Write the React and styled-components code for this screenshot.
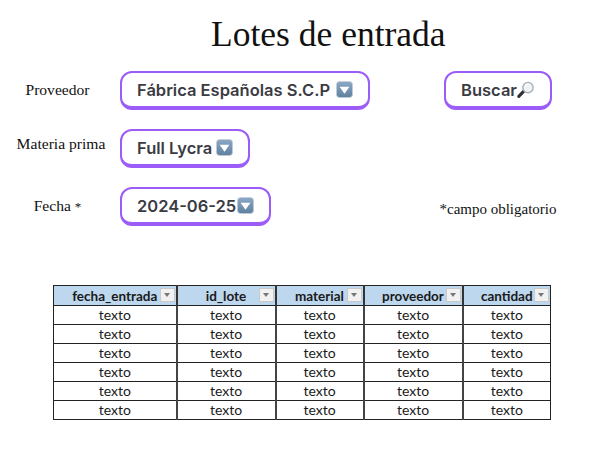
import styled, { createGlobalStyle } from 'styled-components'

const COLUMNS = [
    { name: 'fecha_entrada', width: 123 },
    { name: 'id_lote', width: 99 },
    { name: 'material', width: 88 },
    { name: 'proveedor', width: 99 },
    { name: 'cantidad', width: 88 },
]
const ROWS = [1, 2, 3, 4, 5, 6]

const ArrowEmoji = () => (
    <EmojiSvg $size={17} viewBox="0 0 18 18">
        <defs>
            <linearGradient id="arrowBg" x1="0" y1="0" x2="0" y2="1">
                <stop offset="0" stopColor="#8ba9c6" />
                <stop offset="1" stopColor="#5f7f9f" />
            </linearGradient>
        </defs>
        <rect x="0.5" y="0.5" width="17" height="17" rx="3.5" fill="url(#arrowBg)" stroke="#c4ced8" strokeWidth="0.8" />
        <path d="M3.8 6 H14.2 L9 13.6 Z" fill="#fff" />
    </EmojiSvg>
)

const LensEmoji = () => (
    <EmojiSvg $size={18} viewBox="0 0 18 18">
        <path d="M6.6 10.4 L1.8 15.4" stroke="#2d2f33" strokeWidth="3" strokeLinecap="round" />
        <circle cx="11" cy="6.6" r="5.2" fill="#eef3f7" stroke="#a9afb5" strokeWidth="1.4" />
        <path d="M8 5.6 A3.4 3.4 0 0 1 11 3.2" fill="none" stroke="#fff" strokeWidth="1.2" />
    </EmojiSvg>
)

export default function App() {
    return (
        <Page>
            <GlobalStyle />
            <Title>Lotes de entrada</Title>
            <Form>
                <Row>
                    <Label>Proveedor</Label>
                    <Pill $gap={6}>Fábrica Españolas S.C.P<ArrowEmoji /></Pill>
                    <Side>
                        <Pill>Buscar<LensEmoji /></Pill>
                    </Side>
                </Row>
                <Row>
                    <Label $shift={7} $top={6}>Materia prima</Label>
                    <Pill $gap={4}>Full Lycra<ArrowEmoji /></Pill>
                </Row>
                <Row>
                    <Label>Fecha <Star>*</Star></Label>
                    <Pill $gap={1}>2024-06-25<ArrowEmoji /></Pill>
                    <Side>
                        <Note>*campo obligatorio</Note>
                    </Side>
                </Row>
            </Form>
            <Table>
                <thead>
                    <tr>
                        {COLUMNS.map((col) => (
                            <HeadCell key={col.name} $width={col.width}>
                                {col.name}
                                <FilterButton />
                            </HeadCell>
                        ))}
                    </tr>
                </thead>
                <tbody>
                    {ROWS.map((row) => (
                        <tr key={row}>
                            {COLUMNS.map((col) => (
                                <Cell key={col.name}>texto</Cell>
                            ))}
                        </tr>
                    ))}
                </tbody>
            </Table>
        </Page>
    )
}

const GlobalStyle = createGlobalStyle`
    html, body {
        margin: 0;
        background: #fff;
    }
`
const Page = styled.div`
    width: 598px;
    height: 464px;
    overflow: hidden;
    box-sizing: border-box;
    padding-top: 13px;
    font-family: "Liberation Serif", serif;
    color: #111;
`
const Title = styled.h1`
    margin: 0 0 0 211px;
    font-size: 35.5px;
    line-height: 42px;
    font-weight: 400;
    white-space: nowrap;
`
const Form = styled.div`
    display: flex;
    flex-direction: column;
    gap: 19px;
    margin-top: 16px;
    padding-right: 40px;
`
const Row = styled.div`
    display: flex;
    align-items: flex-start;
    height: 39px;
`
const Label = styled.div`
    box-sizing: border-box;
    width: 120px;
    flex: none;
    padding: ${({ $top }) => $top || 10}px 5px 0 ${({ $shift }) => $shift || 0}px;
    font-size: 15.6px;
    line-height: 18px;
    text-align: center;
    white-space: nowrap;
`
const Star = styled.span`
    font-size: 13px;
`
const Pill = styled.div`
    box-sizing: border-box;
    display: inline-flex;
    align-items: center;
    gap: ${({ $gap }) => $gap || 0}px;
    height: 39px;
    padding: 0 15px;
    background: #fff;
    border: 2px solid #9c5cf7;
    border-bottom-width: 4px;
    border-radius: 12px;
    font-family: Inter, sans-serif;
    font-size: 16.5px;
    font-weight: 600;
    color: #3b3b43;
    white-space: nowrap;
`
const EmojiSvg = styled.svg`
    width: ${({ $size }) => $size}px;
    height: ${({ $size }) => $size}px;
    flex: none;
`
const Side = styled.div`
    width: 120px;
    margin-left: auto;
    display: flex;
    justify-content: center;
`
const Note = styled.div`
    padding-top: 13px;
    font-size: 15px;
    line-height: 18px;
    white-space: nowrap;
`
const Table = styled.table`
    border-collapse: collapse;
    table-layout: fixed;
    width: 497px;
    margin: 59px 0 0 53px;
    font-family: Lato, sans-serif;
    font-size: 14px;
    color: #1a1a1a;
`
const HeadCell = styled.th`
    position: relative;
    box-sizing: border-box;
    width: ${({ $width }) => $width}px;
    height: 20px;
    padding: 0;
    background: #bdd7ee;
    border: 1px solid #222;
    border-left: 2px solid #333;
    font-size: 13.5px;
    font-weight: 700;
    &:first-child {
        border-left: 1px solid #222;
    }
`
const FilterButton = styled.span`
    position: absolute;
    right: 1px;
    top: 2px;
    box-sizing: border-box;
    width: 15px;
    height: 14px;
    background: #f1f1f1;
    border: 1px solid #c9c9c9;

    &::after {
        content: '';
        position: absolute;
        left: 3px;
        top: 4px;
        border-left: 3.5px solid transparent;
        border-right: 3.5px solid transparent;
        border-top: 4px solid #777;
    }
`
const Cell = styled.td`
    box-sizing: border-box;
    height: 18px;
    padding: 0;
    border: 1px solid #222;
    border-left: 2px solid #444;
    text-align: center;
    line-height: 18px;
    &:first-child {
        border-left: 1px solid #222;
    }
`
